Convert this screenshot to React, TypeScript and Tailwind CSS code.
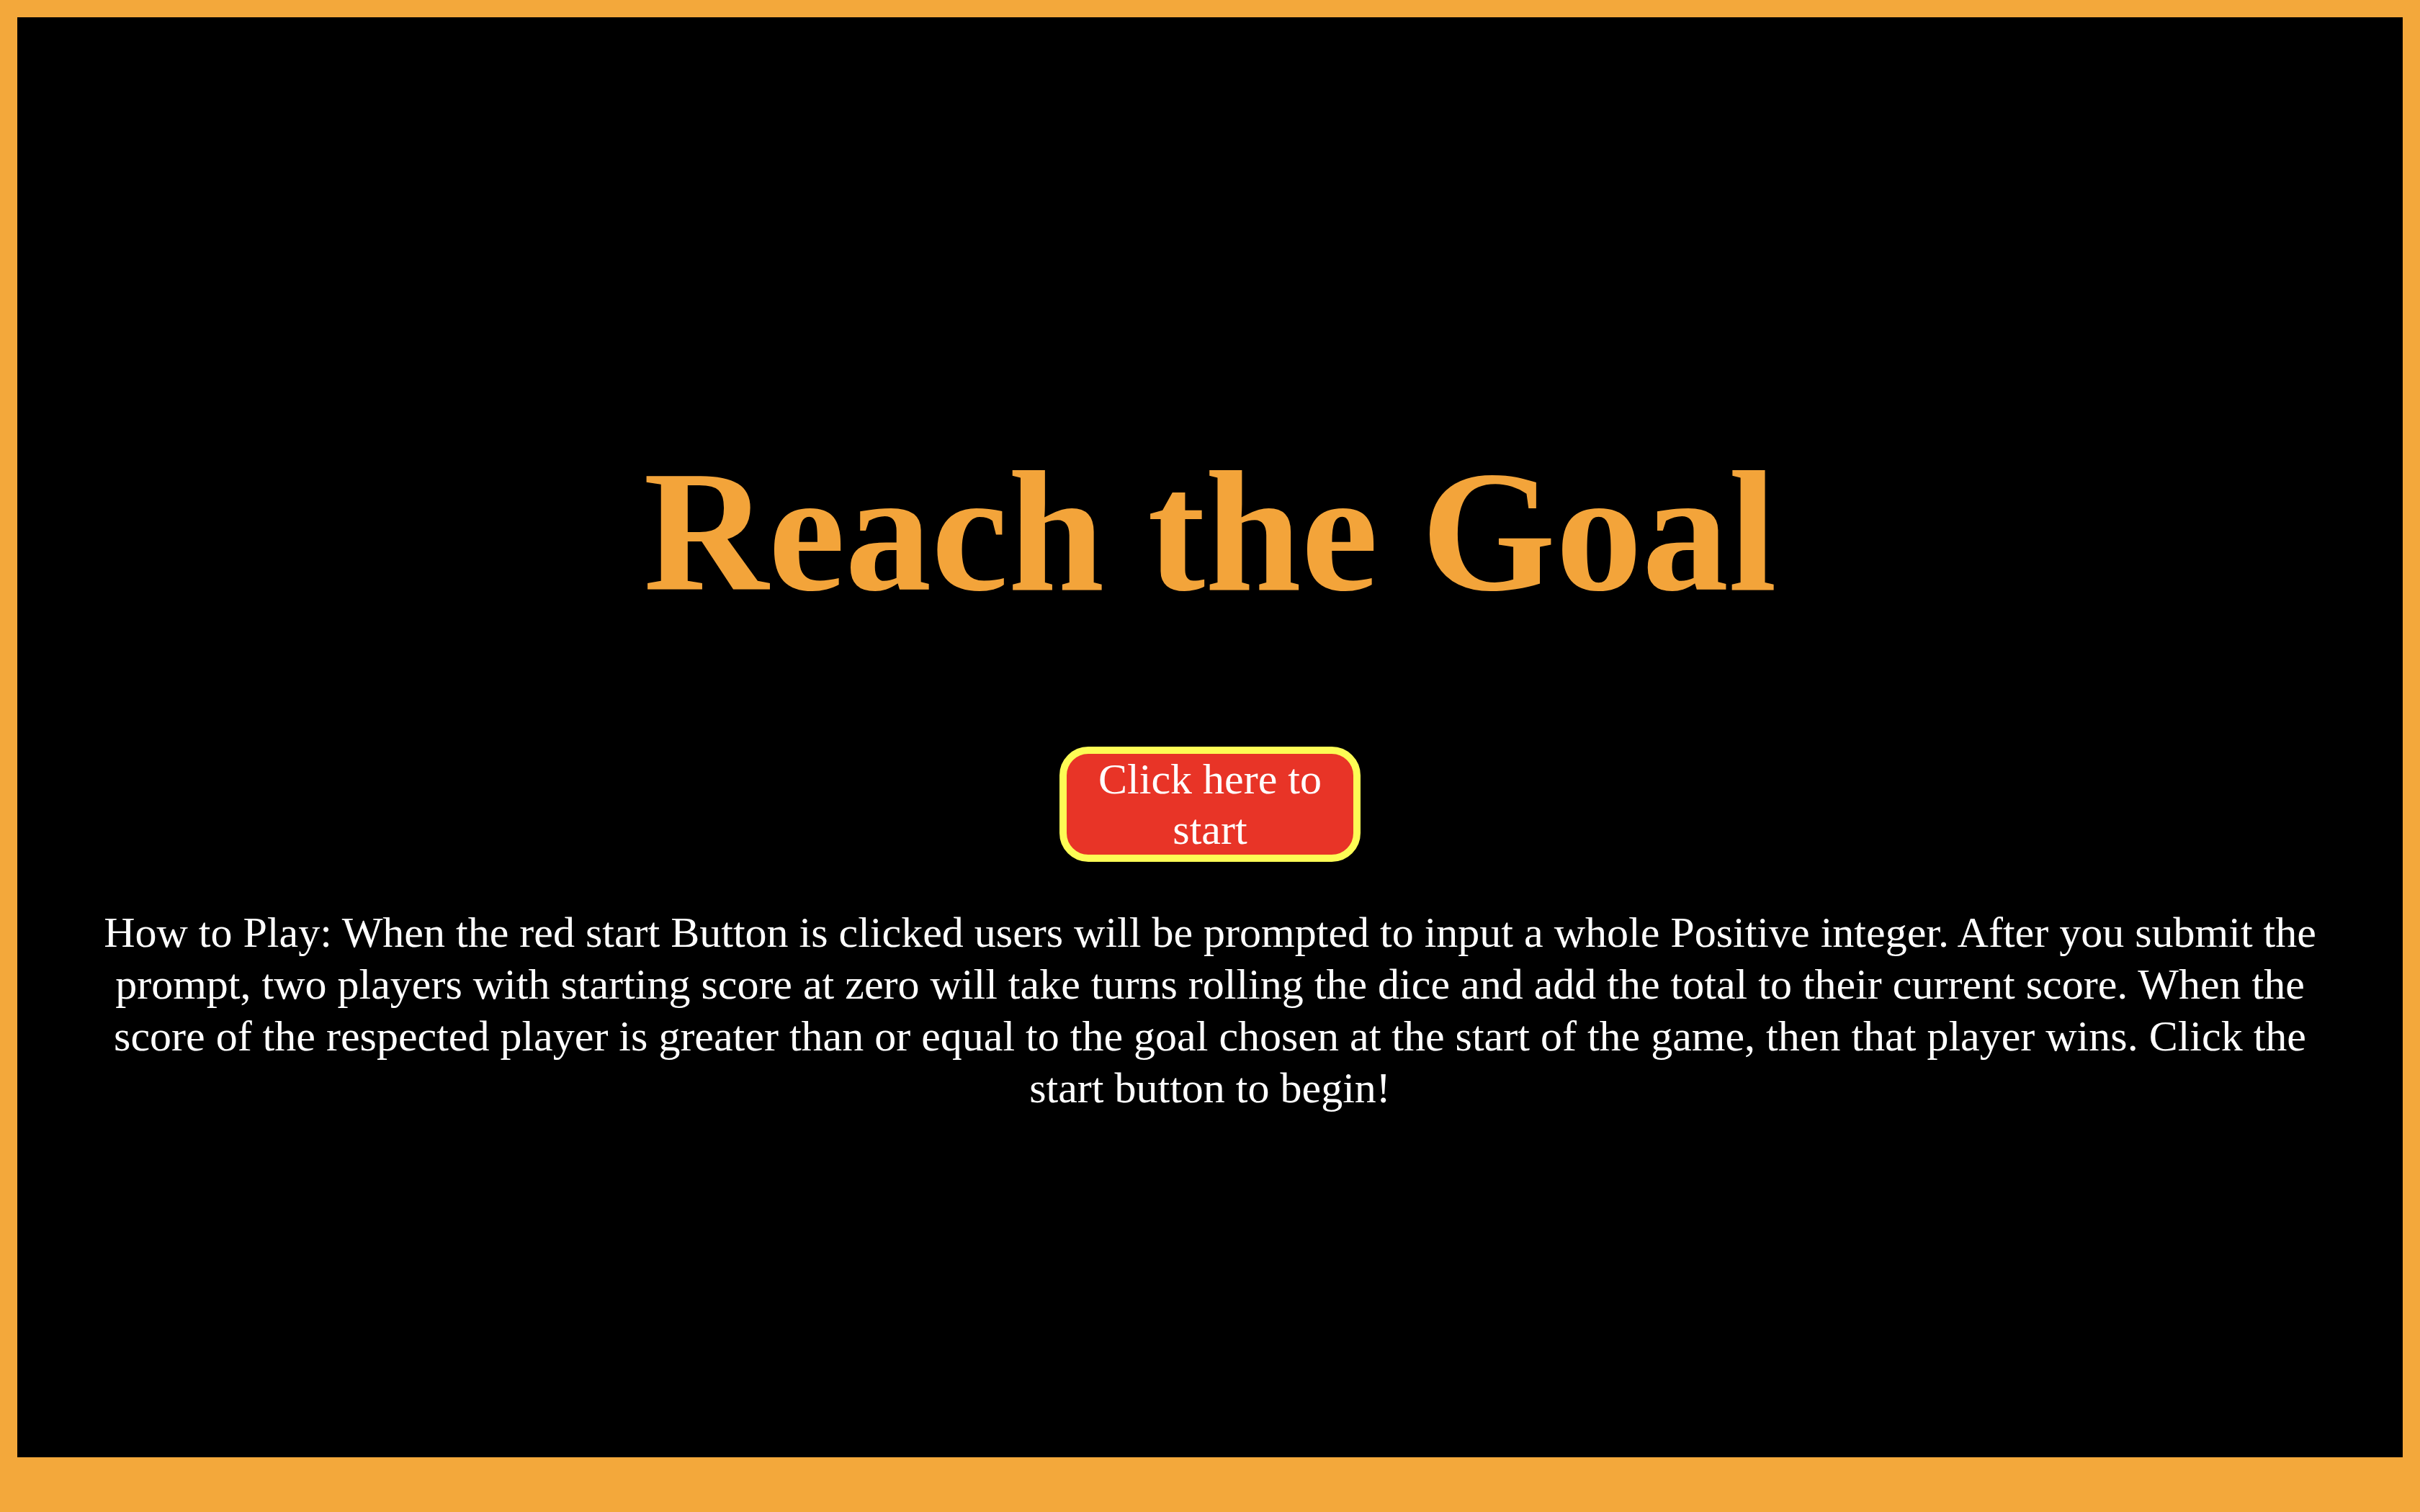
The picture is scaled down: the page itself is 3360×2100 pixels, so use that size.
const App = () => {
    return (
        <div className="h-screen bg-[#f3a83b] px-[24px] pt-[24px] font-['Liberation_Serif','Times_New_Roman',serif]">
            <div className="h-[2000px] bg-black flex flex-col items-center justify-center px-[96px]">
                <h1 className="my-[161px] text-[240px] leading-[276px] font-bold text-[#f3a43a]">
                    Reach the Goal
                </h1>
                <button
                    type="button"
                    className="w-[418px] rounded-[40px] border-[10px] border-[#fdfc55] bg-[#e83427] text-[60px] leading-[70px] text-white"
                >
                    Click here to start
                </button>
                <p className="my-[62px] text-center text-[60px] leading-[72px] text-white">
                    How to Play: When the red start Button is clicked users will be prompted to input a whole Positive integer. After you submit the prompt, two players with starting score at zero will take turns rolling the dice and add the total to their current score. When the score of the respected player is greater than or equal to the goal chosen at the start of the game, then that player wins. Click the start button to begin!
                </p>
            </div>
        </div>
    )
}

export default App;
